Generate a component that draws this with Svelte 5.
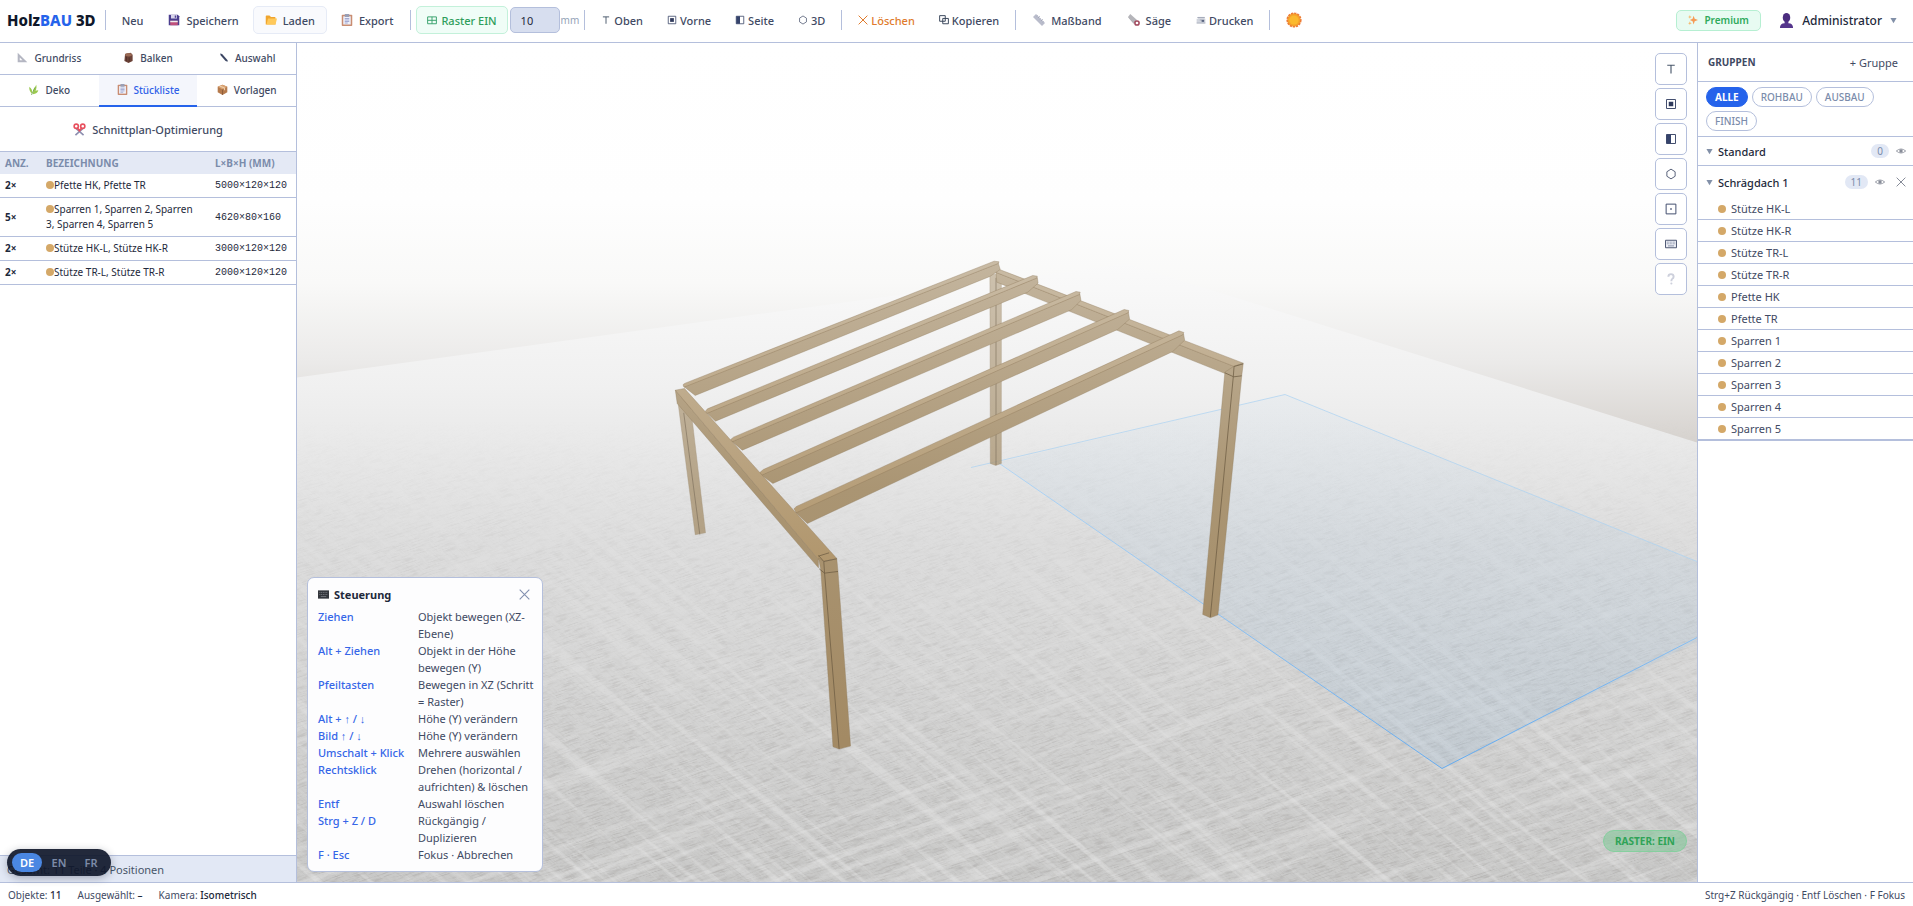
<script>
  let gridSize = $state(10);
  let activeTab = $state('Stückliste');
  let activeFilter = $state('ALLE');
  let activeLang = $state('DE');
  let showHelp = $state(true);

  const tabs = [
    { name: 'Grundriss', icon: 'triangle' },
    { name: 'Balken', icon: 'wood' },
    { name: 'Auswahl', icon: 'pen' },
    { name: 'Deko', icon: 'herb' },
    { name: 'Stückliste', icon: 'clipboard' },
    { name: 'Vorlagen', icon: 'box' }
  ];

  const parts = [
    { count: 2, label: 'Pfette HK, Pfette TR', size: '5000×120×120' },
    { count: 5, label: 'Sparren 1, Sparren 2, Sparren 3, Sparren 4, Sparren 5', size: '4620×80×160' },
    { count: 2, label: 'Stütze HK-L, Stütze HK-R', size: '3000×120×120' },
    { count: 2, label: 'Stütze TR-L, Stütze TR-R', size: '2000×120×120' }
  ];

  const filters = ['ALLE', 'ROHBAU', 'AUSBAU', 'FINISH'];

  const members = [
    'Stütze HK-L', 'Stütze HK-R', 'Stütze TR-L', 'Stütze TR-R', 'Pfette HK', 'Pfette TR',
    'Sparren 1', 'Sparren 2', 'Sparren 3', 'Sparren 4', 'Sparren 5'
  ];

  const views = [
    { title: 'Oben', icon: 'top' },
    { title: 'Vorne', icon: 'front' },
    { title: 'Seite', icon: 'side' },
    { title: '3D', icon: 'hex' },
    { title: 'Einpassen', icon: 'fit' },
    { title: 'Tastatur', icon: 'keyboard' },
    { title: 'Hilfe', icon: 'help' }
  ];

  const shortcuts = [
    ['Ziehen', 'Objekt bewegen (XZ-Ebene)'],
    ['Alt + Ziehen', 'Objekt in der Höhe bewegen (Y)'],
    ['Pfeiltasten', 'Bewegen in XZ (Schritt = Raster)'],
    ['Alt + ↑ / ↓', 'Höhe (Y) verändern'],
    ['Bild ↑ / ↓', 'Höhe (Y) verändern'],
    ['Umschalt + Klick', 'Mehrere auswählen'],
    ['Rechtsklick', 'Drehen (horizontal / aufrichten) & löschen'],
    ['Entf', 'Auswahl löschen'],
    ['Strg + Z / D', 'Rückgängig / Duplizieren'],
    ['F · Esc', 'Fokus · Abbrechen']
  ];

  // rafters from back to front: side face and top strip
  const rafters = [
    { side: '62,441 884,71 889,90 862,111 92,468', top: '60,436 66,431 873,65 886,67 884,72 63,443' },
    { side: '122,520 986,114 988,131 961,158 145,545', top: '118,516 124,508 974,108 986,110 984,116 122,522' },
    { side: '188,606 1097,163 1100,183 1075,211 215,632', top: '184,601 192,593 1087,156 1098,158 1096,165 188,607' },
    { side: '264,706 1224,217 1227,239 1196,270 295,732', top: '260,700 270,690 1213,210 1225,213 1223,220 264,708' },
    { side: '354,818 1368,283 1371,302 1340,336 385,852', top: '350,808 358,800 1356,274 1369,279 1366,286 356,820' }
  ];
</script>

{#snippet icon(name)}
  <svg class="icon" viewBox="0 0 16 16" aria-hidden="true">
    {#if name === 'save'}
      <path d="M1 1h12l2 2v12H1z" fill="#4b3f8f" />
      <path d="M4 1h8v5H4z" fill="#d9d5ea" /><path d="M9 2h2v3H9z" fill="#4b3f8f" />
      <path d="M3 9h10v6H3z" fill="#c0507c" /><path d="M3 9h10v2H3z" fill="#eee" />
    {:else if name === 'folder'}
      <path d="M1 3q0-1 1-1h4l2 2h5q1 0 1 1v9H1z" fill="#f0a52e" />
      <path d="M2 14 4 6h12l-2 8z" fill="#ffc95a" />
    {:else if name === 'clipboard'}
      <rect x="1" y="1" width="14" height="15" rx="1" fill="#c98d72" />
      <path d="M3 3h10v11H3z" fill="#eef0fa" /><path d="M5 0h6v4H5z" fill="#9a9fb5" />
      <path d="M5 6h6M5 8h6M5 10h6M5 12h4" stroke="#8b93c4" />
    {:else if name === 'grid'}
      <path d="M1 3h14v11H1zM8 3v11M1 8.500h14" fill="none" stroke="#33a06a" stroke-width="1.500" />
    {:else if name === 'top'}
      <path d="M3 3h10M8 3v11" fill="none" stroke="#475569" stroke-width="1.500" />
    {:else if name === 'front'}
      <path d="M2 2h12v12H2z" fill="none" stroke="#3f4a6b" stroke-width="1.300" /><path d="M5 5h6v6H5z" fill="#2f3a5c" />
    {:else if name === 'side'}
      <path d="M2 2h12v12H2z" fill="none" stroke="#3f4a6b" stroke-width="1.300" /><path d="M2 2h6v12H2z" fill="#35436b" />
    {:else if name === 'hex'}
      <path d="M8 1.500 13.500 5v6L8 14.500 2.500 11V5z" fill="none" stroke="#566078" stroke-width="1.300" />
    {:else if name === 'fit'}
      <path d="M1.500 1.500h13v13h-13z" fill="none" stroke="#3f4a6b" stroke-width="1.300" /><path d="M7 7h2v2H7z" fill="#3f4a6b" />
    {:else if name === 'keyboard'}
      <path d="M.7 3h14.600v10H.7z" fill="#eceef5" stroke="#4a5470" stroke-width="1.300" />
      <path d="M2.500 5.500h11M2.500 7.700h11" stroke="#6b7592" stroke-dasharray="1.200 .8" /><path d="M4 10.500h8" stroke="#6b7592" />
    {:else if name === 'keys'}
      <path d="M0 2h16v12H0z" fill="#33363c" /><path d="M2 5h12M2 8h12" stroke="#8d9097" stroke-dasharray="1.500 1" /><path d="M4 11h8" stroke="#8d9097" />
    {:else if name === 'help'}
      <path d="M4.500 5q0-3.500 3.500-3.500T11.500 5q0 2-2 3Q8.500 8.600 8.500 11" fill="none" stroke="#cdd0dc" stroke-width="2.600" />
      <circle cx="8.500" cy="14" r="1.400" fill="#cdd0dc" />
    {:else if name === 'cross'}
      <path d="m1 1 14 14M15 1 1 15" fill="none" stroke="currentColor" stroke-width="1.600" />
    {:else if name === 'copy'}
      <path d="M1 1h9v9H1zM6 5.500h9V14H6z" fill="none" stroke="#334155" stroke-width="1.500" />
    {:else if name === 'ruler'}
      <path d="M4 0 16 12l-4 4L0 4z" fill="#b9bccb" /><path d="m5 3 1-1M7 5l2-2M9 7l1-1M11 9l2-2M13 11l1-1" stroke="#9195a8" />
    {:else if name === 'saw'}
      <path d="M3 0 12 8 8 13 0 4z" fill="#b5b5ba" /><path d="m1 5 7 8" stroke="#85858d" stroke-dasharray="1 1" />
      <circle cx="12" cy="12" r="2.800" fill="none" stroke="#a1485c" stroke-width="2" />
    {:else if name === 'printer'}
      <path d="M3 3h11v4H3z" fill="#d5d8e0" /><path d="M1 6h14v7H1z" fill="#d0d4dd" /><path d="M2 4h12M1 13h14M6 8h7" stroke="#8b92a5" /><path d="M9 8h4v3H9z" fill="#59647f" />
    {:else if name === 'sun'}
      <circle cx="8" cy="8" r="6.800" fill="#f5a32b" stroke="#ee7b35" stroke-width="1.600" stroke-dasharray="2.200 1" />
      <circle cx="8" cy="8" r="4.600" fill="#fbb92d" />
    {:else if name === 'sparkle'}
      <path d="m9 1 1.700 5L16 8l-5.300 2L9 15l-1.700-5L3 8l4.300-2z" fill="#f59a55" />
      <path d="m3 0 .8 2.200L6 3l-2.200.8L3 6l-.8-2.200L0 3l2.200-.8zM3 10l.8 2.200L6 13l-2.200.8L3 16l-.8-2.200L0 13l2.200-.8z" fill="#f8b35e" />
    {:else if name === 'user'}
      <ellipse cx="8" cy="5" rx="4" ry="5" fill="#4b2d7f" /><path d="M1 16q0-5 5-5V9h4v2q5 0 5 5z" fill="#55358c" />
    {:else if name === 'triangle'}
      <path d="M1 1v14h14z" fill="#b4b6c2" /><path d="M4 8v4h4z" fill="#fff" />
    {:else if name === 'wood'}
      <path d="m3 3 8-2 3 3v9l-6 3-6-3z" fill="#6b4238" /><ellipse cx="8" cy="4" rx="5" ry="2.500" fill="#9a6a55" /><path d="M5 7v6M9 8v6" stroke="#482a25" />
    {:else if name === 'pen'}
      <path d="m3 2 3 1 8 9v2l-3-1-7-8z" fill="#3b4663" />
    {:else if name === 'herb'}
      <path d="M7 15Q7 8 12 1q2 7-5 14zM6 14Q1 10 2 4q5 4 4 10zM7 15q2-6 8-6-1 5-8 6z" fill="#9bc94f" /><path d="M5 16 10 5" stroke="#5f9a3c" />
    {:else if name === 'box'}
      <path d="m8 1 7 3v8l-7 4-7-4V4z" fill="#b57a4c" /><path d="m8 1 7 3-7 4-7-4z" fill="#d9a373" /><path d="M8 8v8" stroke="#7f5233" /><path d="m4 3 7 3v3" fill="none" stroke="#efd2b0" stroke-width="1.500" />
    {:else if name === 'scissors'}
      <path d="m4 7 9 8M12 7l-9 8" stroke="#8d8fb0" stroke-width="2" /><circle cx="4" cy="4" r="2.600" fill="none" stroke="#e8505e" stroke-width="2" /><circle cx="12" cy="4" r="2.600" fill="none" stroke="#e8505e" stroke-width="2" /><path d="m5 6 4 4M11 6l-4 4" stroke="#e8505e" stroke-width="2" />
    {:else if name === 'eye'}
      <path d="M.5 8Q8 1.500 15.500 8 8 14.500.5 8z" fill="none" stroke="#878c98" stroke-width="1.300" /><circle cx="8" cy="8" r="2.800" fill="#878c98" />
    {:else if name === 'down'}
      <path d="M1 2h14L8 14z" fill="currentColor" />
    {/if}
  </svg>
{/snippet}

<div class="app">
  <header class="toolbar">
    <h1 class="logo">Holz<span>BAU</span> 3D</h1>
    <i class="sep"></i>
    <button class="tool">Neu</button>
    <button class="tool wide">{@render icon('save')} Speichern</button>
    <button class="tool wide outlined">{@render icon('folder')} Laden</button>
    <button class="tool wide">{@render icon('clipboard')} Export</button>
    <i class="sep"></i>
    <button class="tool raster">{@render icon('grid')} Raster EIN</button>
    <label class="grid-size"><input type="text" aria-label="Rastermaß" bind:value={gridSize} />mm</label>
    <i class="sep"></i>
    <button class="tool">{@render icon('top')} Oben</button>
    <button class="tool">{@render icon('front')} Vorne</button>
    <button class="tool">{@render icon('side')} Seite</button>
    <button class="tool">{@render icon('hex')} 3D</button>
    <i class="sep"></i>
    <button class="tool delete">{@render icon('cross')} Löschen</button>
    <button class="tool">{@render icon('copy')} Kopieren</button>
    <i class="sep"></i>
    <button class="tool wide">{@render icon('ruler')} Maßband</button>
    <button class="tool wide">{@render icon('saw')} Säge</button>
    <button class="tool">{@render icon('printer')} Drucken</button>
    <i class="sep"></i>
    <button class="tool theme" aria-label="Design">{@render icon('sun')}</button>
    <div class="account">
      <button class="premium">{@render icon('sparkle')} Premium</button>
      <button class="user">{@render icon('user')} Administrator <span class="caret">{@render icon('down')}</span></button>
    </div>
  </header>

  <main>
    <aside class="left">
      <nav class="tabs">
        {#each tabs as tab}
          <button class:active={activeTab === tab.name} onclick={() => (activeTab = tab.name)}>
            {@render icon(tab.icon)} {tab.name}
          </button>
        {/each}
      </nav>
      <button class="optimize">{@render icon('scissors')} Schnittplan-Optimierung</button>
      <table>
        <thead>
          <tr><th class="count">ANZ.</th><th>BEZEICHNUNG</th><th class="size">L×B×H (MM)</th></tr>
        </thead>
        <tbody>
          {#each parts as part}
            <tr>
              <td><b>{part.count}×</b></td>
              <td class="label"><i class="dot"></i>{part.label}</td>
              <td class="mono">{part.size}</td>
            </tr>
          {/each}
        </tbody>
      </table>
      <div class="summary">Gesamt: 11 Teile · 4 Positionen</div>
      <div class="langs">
        {#each ['DE', 'EN', 'FR'] as lang}
          <button class:active={activeLang === lang} onclick={() => (activeLang = lang)}>{lang}</button>
        {/each}
      </div>
    </aside>

    <section class="viewport">
      <svg class="scene" viewBox="297 43 1400 840" preserveAspectRatio="xMidYMid slice" role="img" aria-label="Schrägdach">
        <defs>
          <linearGradient id="sky" x1="0" y1="43" x2="0" y2="443" gradientUnits="userSpaceOnUse">
            <stop offset="0" stop-color="#fff" /><stop offset=".4" stop-color="#fefefe" /><stop offset=".6" stop-color="#f9f9f8" /><stop offset=".8" stop-color="#ebeae9" /><stop offset="1" stop-color="#d6d2ce" />
          </linearGradient>
          <linearGradient id="floor" x1="0" y1="264" x2="0" y2="883" gradientUnits="userSpaceOnUse">
            <stop offset="0" stop-color="#fafafa" /><stop offset=".2" stop-color="#f0f0f0" /><stop offset=".45" stop-color="#dddddd" /><stop offset="1" stop-color="#c9c9c8" />
          </linearGradient>
          <linearGradient id="fade" x1="0" y1="420" x2="0" y2="883" gradientUnits="userSpaceOnUse">
            <stop offset="0" stop-color="#000" /><stop offset="1" stop-color="#fff" />
          </linearGradient>
          <linearGradient id="blue" x1="0" y1="395" x2="0" y2="769" gradientUnits="userSpaceOnUse">
            <stop offset="0" stop-color="#8fbfe8" stop-opacity=".06" /><stop offset="1" stop-color="#84b0d8" stop-opacity=".18" />
          </linearGradient>
          <linearGradient id="outline" x1="0" y1="463" x2="0" y2="769" gradientUnits="userSpaceOnUse">
            <stop offset="0" stop-color="#b3d6f4" /><stop offset="1" stop-color="#64abf0" />
          </linearGradient>
          <linearGradient id="wood" x1="0" y1="0" x2="0" y2="1500" gradientUnits="userSpaceOnUse">
            <stop offset="0" stop-color="#c6b8a2" /><stop offset=".5" stop-color="#aa9573" /><stop offset="1" stop-color="#a38a64" />
          </linearGradient>
          <linearGradient id="woodTop" x1="0" y1="0" x2="0" y2="1000" gradientUnits="userSpaceOnUse">
            <stop offset="0" stop-color="#cbbea9" /><stop offset="1" stop-color="#b0956b" />
          </linearGradient>
          <filter id="grain" x="0" y="0" width="1" height="1">
            <feTurbulence type="fractalNoise" baseFrequency=".07 .9" numOctaves="3" seed="4" />
            <feColorMatrix values="0 0 0 0 .42  0 0 0 0 .41  0 0 0 0 .4  4 0 0 0 -1.900" />
          </filter>
          <filter id="shine" x="0" y="0" width="1" height="1">
            <feTurbulence type="fractalNoise" baseFrequency=".003 .12" numOctaves="3" seed="9" />
            <feColorMatrix values="0 0 0 0 .87  0 0 0 0 .87  0 0 0 0 .87  5 0 0 0 -2.600" />
          </filter>
          <mask id="near"><rect x="297" y="43" width="1400" height="840" fill="url(#fade)" /></mask>
        </defs>

        <rect x="297" y="43" width="1400" height="840" fill="url(#sky)" />
        <path d="M297 378 1127 264 1697 443V883H297z" fill="url(#floor)" />
        <g mask="url(#near)">
          <rect x="-300" y="200" width="2400" height="1400" filter="url(#grain)" opacity=".55" transform="rotate(-18 997 463)" />
          <rect x="-300" y="-500" width="2400" height="2400" filter="url(#grain)" opacity=".2" transform="rotate(40 997 463)" />
          <rect x="-300" y="-500" width="2400" height="2400" filter="url(#shine)" opacity=".35" transform="rotate(40 997 463)" />
          <rect x="-300" y="200" width="2400" height="1400" filter="url(#shine)" opacity=".3" transform="rotate(-20 997 463)" />
        </g>
        <path d="M998 463 1285 395 1697 562V642L1442 769z" fill="url(#blue)" />
        <path d="M971 468 1285 395 1697 562" fill="none" stroke="#a9d1f2" stroke-opacity=".7" />
        <path d="M998 463 1442 769 1697 638" fill="none" stroke="url(#outline)" />

        <g transform="translate(660 240) scale(.3827 .3333)">
          <g opacity=".8">
            <path class="wood" d="M862 104H892V672L877 678 863 672z" /><path class="edge" d="M878 115V677" />
            <path class="wood" d="M44 462 80 500 119 880 92 886z" /><path class="edge" d="M62 520 104 885" />
          </g>
          <path class="wood" d="M878 98 1500 380 1498 412 880 128z" />
          <path class="plate" d="M878 86 1524 371 1500 381 874 97z" />
          {#each rafters as rafter}
            <polygon class="wood" points={rafter.side} />
            <polygon class="plate" points={rafter.top} />
          {/each}
          <path class="wood" d="M1476 398 1500 380 1524 372 1520 410 1458 1126 1438 1135 1418 1125z" />
          <path class="edge" d="M1476 400 1499 412 1520 409M1500 381 1498 412 1438 1133M1500 381 1524 373" />
          <path class="wood" d="M40 452 414 960V985L45 492z" />
          <path class="plate" d="M40 452 64 447 462 957 428 966 414 960z" />
          <path class="wood" d="M414 955 428 966 462 958 465 995 498 1520 468 1529 452 1522 420 990z" />
          <path class="edge" d="M414 948 428 966 462 958M428 966 430 1000 468 1528M416 988 430 1001 465 996M414 950 442 940" />
        </g>
      </svg>

      <div class="views">
        {#each views as view}
          <button title={view.title} aria-label={view.title}>{@render icon(view.icon)}</button>
        {/each}
      </div>

      {#if showHelp}
        <div class="help">
          <h2>{@render icon('keys')} Steuerung
            <button aria-label="Schließen" onclick={() => (showHelp = false)}>{@render icon('cross')}</button>
          </h2>
          <dl>
            {#each shortcuts as [keys, action]}
              <dt>{keys}</dt>
              <dd>{action}</dd>
            {/each}
          </dl>
        </div>
      {/if}
      <div class="raster-state">RASTER: EIN</div>
    </section>

    <aside class="right">
      <div class="groups-head">
        <h2>GRUPPEN</h2>
        <button>+ Gruppe</button>
      </div>
      <div class="filters">
        {#each filters as filter}
          <button class:active={activeFilter === filter} onclick={() => (activeFilter = filter)}>{filter}</button>
        {/each}
      </div>
      <div class="group">
        <div class="group-row">
          <span class="caret">{@render icon('down')}</span>
          <h3>Standard</h3>
          <span class="badge">0</span>
          <button aria-label="Standard ausblenden">{@render icon('eye')}</button>
        </div>
      </div>
      <div class="group">
        <div class="group-row open">
          <span class="caret">{@render icon('down')}</span>
          <h3>Schrägdach 1</h3>
          <span class="badge">11</span>
          <button aria-label="Schrägdach 1 ausblenden">{@render icon('eye')}</button>
          <button class="remove" aria-label="Schrägdach 1 löschen">{@render icon('cross')}</button>
        </div>
        <ul>
          {#each members as member}
            <li><i class="dot"></i>{member}</li>
          {/each}
        </ul>
      </div>
    </aside>
  </main>

  <footer>
    <span>Objekte: <b>11</b></span>
    <span>Ausgewählt: <b>–</b></span>
    <span>Kamera: <b>Isometrisch</b></span>
    <span class="keys">Strg+Z Rückgängig · Entf Löschen · F Fokus</span>
  </footer>
</div>

<style>
  :global(body) {
    background: #fff;
  }

  .app {
    display: flex;
    flex-direction: column;
    height: 100vh;
    font-family: 'Noto Sans', 'Segoe UI', sans-serif;
    font-size: 11px;
    color: #3f4a63;
  }

  .app * {
    box-sizing: border-box;
  }

  button {
    display: flex;
    align-items: center;
    justify-content: center;
    padding: 0;
    border: 0;
    background: none;
    color: inherit;
    font: inherit;
    white-space: nowrap;
    cursor: pointer;
  }

  h1, h2, h3, ul, dl, dd {
    margin: 0;
    padding: 0;
  }

  .icon {
    width: 10px;
    height: 10px;
    flex: none;
  }

  .toolbar {
    display: flex;
    align-items: center;
    gap: 2px;
    height: 43px;
    flex: none;
    padding: 0 16px 2px 7px;
    border-bottom: 1px solid #b4bfdc;
  }

  .logo {
    margin-right: 4px;
    color: #0f172a;
    font-size: 15px;
    font-weight: 800;
    white-space: nowrap;
  }

  .logo span {
    color: #2563eb;
  }

  .sep {
    width: 1px;
    height: 20px;
    margin: 0 3px;
    background: #b4bfdc;
  }

  .tool {
    gap: 3px;
    height: 28px;
    padding: 0 10px;
    border: 1px solid transparent;
    border-radius: 5px;
    font-weight: 500;
  }

  .wide {
    gap: 6px;
    padding: 0 11px;
  }

  .wide .icon {
    width: 12px;
    height: 12px;
  }

  .outlined {
    background: #f9fafd;
    border-color: #e6ebf6;
  }

  .raster {
    gap: 4px;
    background: #f0fdf7;
    border-color: #c3f1da;
    color: #2f9e5b;
  }

  .grid-size {
    display: flex;
    align-items: center;
    gap: 1px;
    color: #94a3b8;
    font-size: 10px;
  }

  input {
    width: 50px;
    height: 26px;
    padding: 0 10px;
    border: 1px solid #b4bfdc;
    border-radius: 5px;
    background: #d7deef;
    color: #1e293b;
    font: inherit;
    font-size: 11px;
  }

  .delete {
    color: #e07b2c;
  }

  .theme .icon {
    width: 16px;
    height: 16px;
  }

  .account {
    display: flex;
    align-items: center;
    gap: 18px;
    margin-left: auto;
  }

  .premium {
    gap: 6px;
    width: 85px;
    height: 21px;
    border: 1px solid #b6efd2;
    border-radius: 5px;
    background: #e8fbf2;
    color: #2faa5c;
    font-size: 10px;
    font-weight: 600;
  }

  .user {
    gap: 8px;
    color: #1e293b;
    font-size: 12px;
    font-weight: 500;
  }

  .user .icon {
    width: 15px;
    height: 15px;
  }

  .caret {
    display: flex;
    color: #8290a8;
  }

  .caret .icon, .user .caret .icon {
    width: 7px;
    height: 7px;
  }

  main {
    display: flex;
    flex: 1;
    min-height: 0;
  }

  .left {
    display: flex;
    flex-direction: column;
    position: relative;
    width: 297px;
    flex: none;
    border-right: 1px solid #b4bfdc;
  }

  .tabs {
    display: grid;
    grid-template-columns: repeat(3, 1fr);
  }

  .tabs button {
    gap: 6px;
    height: 32px;
    padding-bottom: 2px;
    border-bottom: 1px solid #b4bfdc;
    font-size: 10px;
    font-weight: 500;
  }

  .tabs .icon {
    width: 11px;
    height: 11px;
  }

  .tabs .active {
    padding-bottom: 1px;
    border-bottom: 2px solid #2563eb;
    background: #f4f6fc;
    color: #2f5fe8;
  }

  .optimize {
    gap: 6px;
    height: 44px;
    font-weight: 500;
  }

  .optimize .icon {
    width: 13px;
    height: 13px;
  }

  table {
    width: 100%;
    border-collapse: collapse;
    border-top: 1px solid #b4bfdc;
    color: #1e293b;
  }

  th, td {
    padding: 4px 5px;
    line-height: 15px;
    text-align: left;
    font-size: 10px;
  }

  th {
    padding: 4px 5px 3px;
    background: #e4e9f5;
    color: #7b8cab;
  }

  td {
    border-bottom: 1px solid #b4bfdc;
  }

  .count {
    width: 41px;
  }

  .label {
    padding-right: 14px;
  }

  .size {
    width: 86px;
  }

  .mono {
    font-family: 'Liberation Mono', monospace;
  }

  .dot {
    display: inline-block;
    width: 8px;
    height: 8px;
    border-radius: 50%;
    background: #d4a868;
  }

  .summary {
    height: 27px;
    margin-top: auto;
    padding: 0 7px;
    border-top: 1px solid #b4bfdc;
    background: #e2e8f5;
    line-height: 27px;
    color: #475569;
  }

  .langs {
    display: flex;
    gap: 2px;
    position: absolute;
    left: 7px;
    bottom: 6px;
    padding: 4px 5px;
    border-radius: 14px;
    background: rgba(15, 23, 42, 0.92);
    box-shadow: 0 2px 8px rgba(15, 23, 42, 0.3);
  }

  .langs button {
    width: 30px;
    height: 19px;
    border-radius: 10px;
    color: #7c8ba8;
    font-weight: 600;
  }

  .langs .active {
    background: #4a87e2;
    color: #fff;
  }

  .viewport {
    position: relative;
    flex: 1;
    min-width: 0;
    overflow: hidden;
  }

  .scene {
    display: block;
    width: 100%;
    height: 100%;
  }

  .wood {
    fill: url(#wood);
    stroke: #8d7a5c;
    stroke-width: 1;
  }

  .plate {
    fill: url(#woodTop);
    stroke: #8a7556;
    stroke-width: 1;
  }

  .edge {
    fill: none;
    stroke: #6b5940;
    stroke-width: 2;
  }

  .views {
    display: flex;
    flex-direction: column;
    gap: 3px;
    position: absolute;
    top: 10px;
    right: 10px;
  }

  .views button {
    width: 32px;
    height: 32px;
    border: 1px solid #b4bfdc;
    border-radius: 5px;
    background: #fff;
  }

  .views .icon {
    width: 12px;
    height: 12px;
  }

  .help {
    position: absolute;
    left: 10px;
    bottom: 10px;
    width: 236px;
    padding: 8px 4px 8px 10px;
    border: 1px solid #b4bfdc;
    border-radius: 7px;
    background: #fdfdfe;
  }

  .help h2 {
    display: flex;
    align-items: center;
    gap: 5px;
    height: 22px;
    padding-bottom: 5px;
    color: #1e293b;
    font-size: 11px;
  }

  .help h2 .icon {
    width: 11px;
    height: 11px;
  }

  .help h2 button {
    margin-left: auto;
    margin-right: 8px;
    color: #8290b0;
  }

  dl {
    display: grid;
    grid-template-columns: 92px 1fr;
    column-gap: 8px;
    line-height: 17px;
  }

  dt {
    color: #3566e8;
    font-weight: 500;
    white-space: nowrap;
  }

  .raster-state {
    position: absolute;
    right: 10px;
    bottom: 30px;
    padding: 0 11px;
    border: 1px solid #86cf9f;
    border-radius: 11px;
    background: rgba(134, 200, 155, 0.6);
    color: #2fa357;
    font-size: 10px;
    font-weight: 700;
    line-height: 20px;
  }

  .right {
    width: 216px;
    flex: none;
    border-left: 1px solid #b4bfdc;
  }

  .groups-head {
    display: flex;
    align-items: center;
    justify-content: space-between;
    height: 39px;
    padding: 0 15px 0 10px;
    border-bottom: 1px solid #b4bfdc;
  }

  .groups-head h2 {
    font-size: 10px;
  }

  .filters {
    display: flex;
    flex-wrap: wrap;
    gap: 4px;
    padding: 5px 8px;
    border-bottom: 1px solid #b4bfdc;
  }

  .filters button {
    height: 20px;
    padding: 0 8px;
    border: 1px solid #b4bfdc;
    border-radius: 10px;
    color: #7b8cab;
    font-size: 10px;
    font-weight: 500;
  }

  .filters .active {
    border-color: #2563eb;
    background: #2563eb;
    color: #fff;
    font-weight: 700;
  }

  .group {
    border-bottom: 1px solid #b4bfdc;
  }

  .group-row {
    display: flex;
    align-items: center;
    gap: 5px;
    height: 28px;
    padding: 0 7px 0 8px;
  }

  .open {
    height: 32px;
  }

  .group-row h3 {
    flex: 1;
    color: #1e293b;
    font-size: 11px;
    font-weight: 500;
  }

  .group-row button {
    color: #878c98;
  }

  .group-row .remove {
    margin-left: 6px;
  }

  .badge {
    margin-right: 2px;
    padding: 0 6px;
    border-radius: 7px;
    background: #e2e8f5;
    color: #7b8cab;
    font-size: 10px;
    line-height: 14px;
  }

  ul {
    list-style: none;
  }

  li {
    display: flex;
    align-items: center;
    gap: 5px;
    height: 22px;
    padding-left: 20px;
    border-bottom: 1px solid #b4bfdc;
  }

  footer {
    display: flex;
    align-items: center;
    gap: 16px;
    height: 24px;
    flex: none;
    padding: 0 8px;
    border-top: 1px solid #b4bfdc;
    font-size: 10px;
  }

  footer b {
    color: #1e293b;
    font-weight: 500;
  }

  .keys {
    margin-left: auto;
  }
</style>
